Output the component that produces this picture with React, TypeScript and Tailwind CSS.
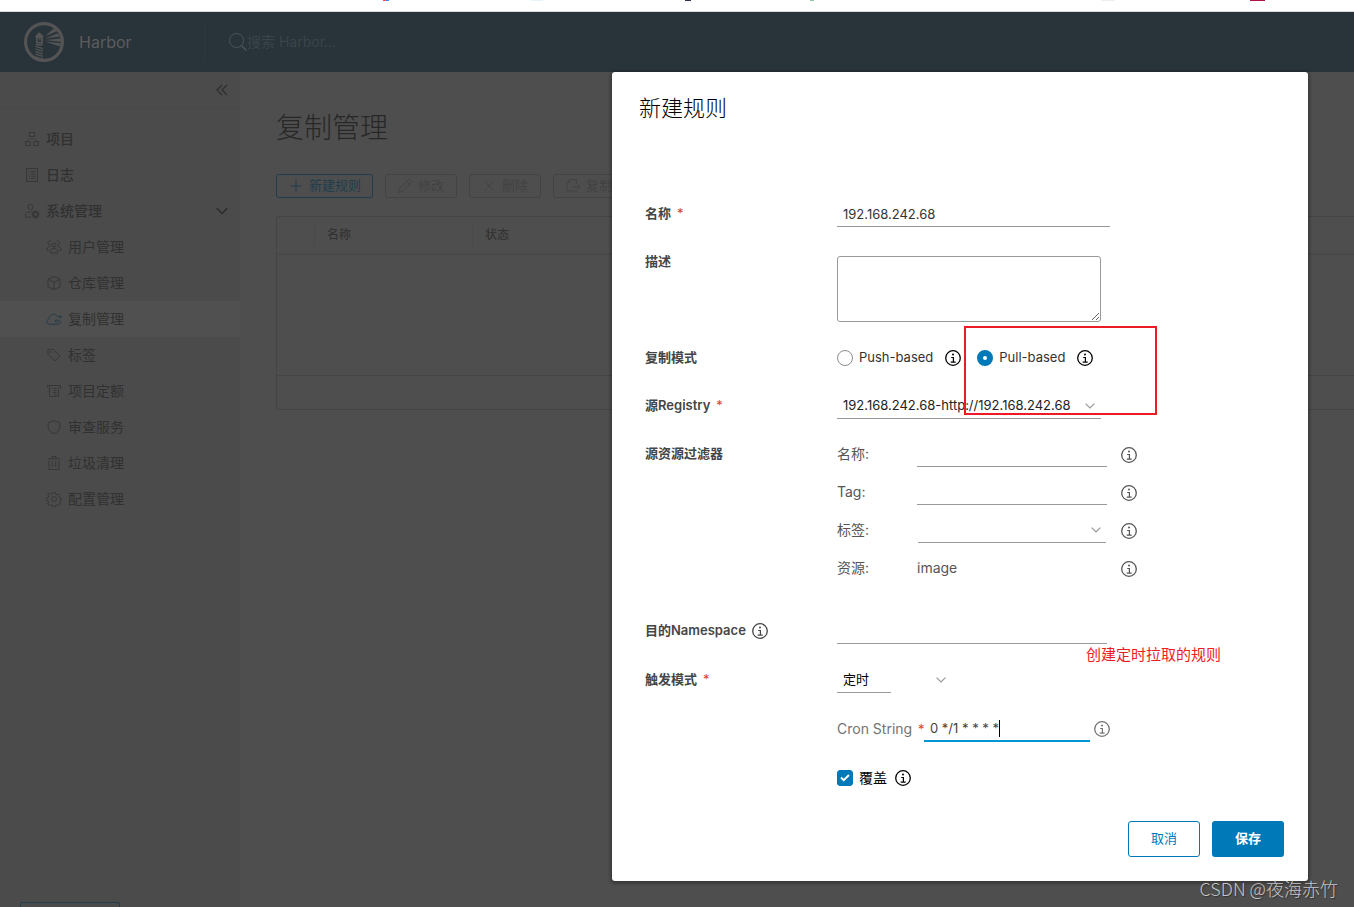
import { ReactNode } from 'react';
import clsx from 'clsx';

type IconName =
  | 'projects'
  | 'logs'
  | 'admin'
  | 'users'
  | 'registry'
  | 'replication'
  | 'tag'
  | 'quota'
  | 'shield'
  | 'trash'
  | 'cog';

const ICONS: Record<IconName, ReactNode> = {
  projects: (
    <>
      <rect x="5.5" y="1.5" width="5" height="4" />
      <rect x="1.5" y="10.5" width="4.5" height="4" />
      <rect x="10" y="10.5" width="4.5" height="4" />
      <path d="M8 5.5v2.5M3.75 10.5V8h8.5v2.5" strokeOpacity=".5" />
    </>
  ),
  logs: (
    <>
      <rect x="2.5" y="1.5" width="11" height="13" />
      <path d="M4.8 4.5h1M7 4.5h4.3M4.8 6.8h1M7 6.8h4.3M4.8 9.1h1M7 9.1h4.3M4.8 11.4h1M7 11.4h4.3" />
    </>
  ),
  admin: (
    <>
      <circle cx="6.5" cy="4" r="2.6" />
      <path d="M7 14.2H1.5v-2.4C2.4 9.8 4.2 8.7 6.5 8.7c.5 0 .9 0 1.3.1" />
      <circle cx="11.5" cy="11.5" r="2.4" strokeWidth="2" />
      <path
        d="M11.5 7.6v1M11.5 14.4v1M7.6 11.5h1M14.4 11.5h1M8.8 8.8l.7.7M13.5 13.5l.7.7M14.2 8.8l-.7.7M9.5 13.5l-.7.7"
        strokeWidth="1.6"
      />
    </>
  ),
  users: (
    <>
      <circle cx="8" cy="6" r="2" />
      <path d="M4.5 14v-2.6C5.2 10 6.4 9.4 8 9.400s2.800.6 3.500 2V14z" />
      <path d="M4.800 5.600a1.900 1.900 0 1 1 .6-3M11.200 5.600a1.900 1.900 0 1 0-.6-3M2.800 11.500H1.200V9.200C1.700 8 2.700 7.400 4.200 7.400M13.200 11.500h1.600V9.200c-.5-1.200-1.500-1.800-3-1.800" />
    </>
  ),
  registry: <path d="M8 1.5l6 2.700v7.600l-6 2.700-6-2.700V4.200zM2 4.200l6 2.900 6-2.900M8 7.100v7.400" />,
  replication: (
    <>
      <path d="M14.800 10.500c-.2 1.600-1.300 2.700-3 2.700H3.500C1.900 13.200.8 12 .8 10.600c0-1.500 1-2.500 2.400-2.700C3 5 5 3.200 7.400 3.200c1.900 0 3.200.9 3.900 2.500" />
      <path d="M11.500 5.700h4M13.800 4l1.700 1.700-1.700 1.700M14 9.800H9M10.700 8L9 9.800l1.700 1.700" />
    </>
  ),
  tag: (
    <>
      <path d="M2 2.800v4.400l6.900 6.900 4.900-4.900L7.200 2.300H2.500z" />
      <circle cx="4.600" cy="4.900" r=".6" />
    </>
  ),
  quota: (
    <>
      <path d="M1.500 4.500v-2h13v3.500M3.500 2.500v11h9v-9" />
      <path d="M6.500 5.500h4M8 7.500h2.500M6.500 9.500h4M8 11.500h2.500" />
    </>
  ),
  shield: <path d="M8 1.400c1.800 1.300 3.700 1.900 5.800 2v5.100c0 2.700-2.400 4.900-5.800 6.200-3.400-1.300-5.800-3.500-5.800-6.200V3.400c2.100-.1 4-.7 5.800-2z" />,
  trash: (
    <>
      <path d="M1.800 3.700h12.400M6 3.500v-2h4v2M3 5.500v9h10v-9" />
      <path d="M6.300 6v6M9.700 6v6" />
    </>
  ),
  cog: (
    <>
      <circle cx="8" cy="8" r="2.500" />
      <path d="M6.700 1.500h2.600l.4 1.800 1.300.5 1.500-1 1.800 1.800-1 1.500.5 1.300 1.700.4v1.600l-1.700.8-.5 1.300 1 1.500-1.800 1.500-1.500-.8-1.300.5-.4 1.800H6.700l-.4-1.800-1.300-.5-1.500 1-1.800-1.800 1-1.500-.5-1.300-1.700-.4V6.900l1.700-.4.500-1.300-1-1.500 1.800-1.500 1.500 1 1.300-.5z" />
    </>
  ),
};

function Icon({ name, className }: { name: IconName; className?: string }) {
  return (
    <svg viewBox="0 0 16 16" className={clsx('w-4 h-4 shrink-0', className)} fill="none" stroke="currentColor">
      {ICONS[name]}
    </svg>
  );
}

function InfoIcon({ className }: { className?: string }) {
  return (
    <svg viewBox="0 0 16 16" className={clsx('w-4 h-4 shrink-0', className)} fill="none" stroke="currentColor">
      <circle cx="8" cy="8" r="7.3" strokeWidth="1.3" />
      <circle cx="8" cy="4.400" r="1" fill="currentColor" stroke="none" />
      <path d="M6.200 7.500h2.200v4.500M5.700 12.100h5" strokeWidth="1.200" />
    </svg>
  );
}

function Chevron({ className }: { className?: string }) {
  return (
    <svg viewBox="0 0 10 6" className={clsx('shrink-0', className ?? 'w-[10px] h-[6px]')} fill="none" stroke="currentColor" strokeWidth="1.2">
      <path d="M.6.6L5 5 9.400.6" />
    </svg>
  );
}

function Logo() {
  return (
    <svg viewBox="0 0 40 40" className="w-10 h-10 text-[#545454]" fill="currentColor">
      <circle cx="20" cy="20" r="18.4" fill="none" stroke="currentColor" strokeWidth="3.200" />
      <path d="M15.300 10.300l3.900 3.500v1.400h-7.800v-1.400z" />
      <path d="M12 15h7v6.500h-7zm1.700 1.500v3.600h3.600v-3.600z" fillRule="evenodd" />
      <path d="M15 17h1.800v1.600H15z" />
      <path d="M11.800 22h7v1.500h-7z" />
      <path
        d="M11.600 24.400l7.400 2.200M11.500 27l7.500 2.200M11.400 29.600l7.600 2.200M11.300 32.200l7.700 2.200M11.200 34.800l7.800 2.200"
        stroke="currentColor"
        strokeWidth="1.200"
      />
      <path d="M21 14.200l9.500-8.500 3 3.300zM21 16.600l12.800-5.400 2 3.300zM21 18l16-1.600v3.600zM21 19.500l16 1.700-1 3.300z" />
    </svg>
  );
}

const NAV: { label: string; icon: IconName; sub?: boolean; open?: boolean; active?: boolean }[] = [
  { label: '项目', icon: 'projects' },
  { label: '日志', icon: 'logs' },
  { label: '系统管理', icon: 'admin', open: true },
  { label: '用户管理', icon: 'users', sub: true },
  { label: '仓库管理', icon: 'registry', sub: true },
  { label: '复制管理', icon: 'replication', sub: true, active: true },
  { label: '标签', icon: 'tag', sub: true },
  { label: '项目定额', icon: 'quota', sub: true },
  { label: '审查服务', icon: 'shield', sub: true },
  { label: '垃圾清理', icon: 'trash', sub: true },
  { label: '配置管理', icon: 'cog', sub: true },
];

function Sidebar() {
  return (
    <aside className="w-60 shrink-0 flex flex-col bg-[#4b4b4b] text-[#313131]">
      <div className="h-9 shrink-0 flex items-center justify-end pr-3 border-b border-[#484848]">
        <button aria-label="Collapse" className="text-[#2c2c2c]">
          <svg viewBox="0 0 12 12" className="w-3 h-3" fill="none" stroke="currentColor" strokeWidth="1.200">
            <path d="M6 .8L1 6l5 5.200M11 .8L6 6l5 5.200" />
          </svg>
        </button>
      </div>
      <nav className="pt-[13px]">
        {NAV.map((item) => (
          <a
            key={item.label}
            href="#"
            className={clsx(
              'h-9 flex items-center gap-[6px] pr-3 text-sm',
              item.sub ? 'pl-[46px]' : 'pl-6 font-medium',
              item.active && 'bg-[#505050]'
            )}
          >
            <Icon name={item.icon} className={item.active ? 'text-[#263c48]' : 'text-[#373737]'} />
            <span className="flex-1">{item.label}</span>
            {item.open && <Chevron className="w-3 h-2 text-[#2c2c2c]" />}
          </a>
        ))}
      </nav>
      <div className="mt-auto mx-5 w-[100px] h-[5px] border border-b-0 border-[#243e4c] rounded-t-[3px]" />
    </aside>
  );
}

function ToolButton({ children, label, primary }: { children: ReactNode; label: string; primary?: boolean }) {
  return (
    <button
      disabled={!primary}
      className={clsx(
        'h-6 min-w-[72px] shrink-0 flex items-center gap-[5px] px-[11px] border rounded-[3px] text-[13px]',
        primary ? 'border-[#1f3d4d] text-[#1f3d4d]' : 'border-[#434343] text-[#424242]'
      )}
    >
      <svg viewBox="0 0 16 16" className="w-4 h-4" fill="none" stroke="currentColor">
        {children}
      </svg>
      {label}
    </button>
  );
}

function RulesPage() {
  return (
    <main className="flex-1 min-w-0 overflow-hidden pl-9 pt-9 bg-[#4e4e4e]">
      <h1 className="text-[28px] leading-10 font-light text-[#272727]">复制管理</h1>
      <div className="flex gap-3 mt-[26px]">
        <ToolButton label="新建规则" primary>
          <path d="M8 2.500v11M2.500 8h11" />
        </ToolButton>
        <ToolButton label="修改">
          <path d="M1.500 14.500l1-4L11.300 1.800c.6-.6 1.300-.5 1.900 0l1 1c.5.600.6 1.300 0 1.900L5.500 13.500zM9.800 3.300l2.900 2.900" />
        </ToolButton>
        <ToolButton label="删除">
          <path d="M4 4l8 8M12 4l-8 8" />
        </ToolButton>
        <ToolButton label="复制">
          <path d="M11.500 5.500v-4H5L2 4.500V13h9.500v-1M5 1.500v3H2M7.500 8.800H15M12.500 6.200L15 8.800l-2.500 2.600" />
        </ToolButton>
      </div>
      <div className="mt-[18px] border border-r-0 border-[#444] rounded-l-[3px]">
        <table className="w-full table-fixed text-xs text-left text-[#333]">
          <thead>
            <tr className="h-[37px] border-b-2 border-[#494949]">
              <th className="w-[37px]" />
              <th className="w-[158px] font-medium">
                <div className="h-6 leading-6 pl-3 border-l border-[#494949]">名称</div>
              </th>
              <th className="font-medium">
                <div className="h-6 leading-6 pl-3 border-l border-[#494949]">状态</div>
              </th>
            </tr>
          </thead>
          <tbody>
            <tr className="h-[121px]">
              <td colSpan={3} />
            </tr>
          </tbody>
        </table>
        <div className="h-[34px] border-t border-[#444]" />
      </div>
    </main>
  );
}

function Row({ label, htmlFor, required, info, className, children }: {
  label: string;
  htmlFor?: string;
  required?: boolean;
  info?: boolean;
  className?: string;
  children: ReactNode;
}) {
  return (
    <div className={clsx('flex items-start', className ?? 'min-h-12')}>
      <div className="w-48 shrink-0 h-[26px] flex items-center gap-[6px] text-[13px] font-semibold text-[#454545]">
        <label htmlFor={htmlFor}>{label}</label>
        {required && <span className="font-normal text-[#d9442a]">*</span>}
        {info && <InfoIcon />}
      </div>
      <div className="flex-1 min-w-0">{children}</div>
    </div>
  );
}

function Mode({ id, label, checked }: { id: string; label: string; checked?: boolean }) {
  return (
    <div className="flex items-center text-black">
      <input
        type="radio"
        id={id}
        name="mode"
        defaultChecked={checked}
        className="appearance-none w-4 h-4 mr-[6px] rounded-full border border-[#8c8c8c] checked:border-[6px] checked:border-[#0079b8]"
      />
      <label htmlFor={id} className="mr-3 text-[13px] text-[#333]">{label}</label>
      <InfoIcon />
    </div>
  );
}

const FIELD = 'block h-[26px] bg-transparent border-b border-[#999] outline-none text-[13px]';

function FilterRow({ label, id, children }: { label: string; id: string; children: ReactNode }) {
  return (
    <div className="h-[26px] flex items-center text-sm text-[#565656]">
      <label htmlFor={id} className="w-20">{label}</label>
      <div className="w-[204px]">{children}</div>
      <InfoIcon className="mt-[2px]" />
    </div>
  );
}

function RuleDialog() {
  return (
    <section
      role="dialog"
      aria-label="新建规则"
      className="relative w-[696px] bg-white rounded-[3px] shadow-[0_1px_3px_2px_rgba(0,0,0,0.25)]"
    >
      <h3 className="px-[27px] pt-5 text-[22px] leading-8 font-light text-black">新建规则</h3>
      <form className="px-[33px] pt-[77px]">
        <Row label="名称" htmlFor="name" required>
          <input id="name" defaultValue="192.168.242.68" className={clsx(FIELD, 'w-[273px] px-[6px] text-[#333]')} />
        </Row>
        <Row label="描述" htmlFor="desc" className="h-24">
          <textarea id="desc" className="block w-[264px] h-[66px] mt-[7px] border border-[#999] rounded-[3px]" />
        </Row>
        <Row label="复制模式" htmlFor="push">
          <div className="h-[26px] flex items-center gap-4">
            <Mode id="push" label="Push-based" />
            <Mode id="pull" label="Pull-based" checked />
          </div>
        </Row>
        <Row label="源Registry" htmlFor="registry" required>
          <div className="w-[264px] relative">
            <select id="registry" className={clsx(FIELD, 'appearance-none w-full px-[6px] text-[#222]')}>
              <option>192.168.242.68-http://192.168.242.68</option>
            </select>
            <Chevron className="absolute w-[10px] h-[6px] right-[6px] top-[10px] text-[#999]" />
          </div>
        </Row>
        <Row label="源资源过滤器" htmlFor="filter-name" className="h-[177px]">
          <div className="flex flex-col gap-3">
            <FilterRow label="名称:" id="filter-name">
              <input id="filter-name" className={clsx(FIELD, 'w-[190px]')} />
            </FilterRow>
            <FilterRow label="Tag:" id="filter-tag">
              <input id="filter-tag" className={clsx(FIELD, 'w-[190px]')} />
            </FilterRow>
            <FilterRow label="标签:" id="filter-label">
              <div className="w-[190px] px-px relative">
                <select id="filter-label" className={clsx(FIELD, 'appearance-none w-full')}>
                  <option></option>
                </select>
                <Chevron className="absolute w-[10px] h-[6px] right-[6px] top-[10px] text-[#999]" />
              </div>
            </FilterRow>
            <FilterRow label="资源:" id="filter-resource">
              <output id="filter-resource">image</output>
            </FilterRow>
          </div>
        </Row>
        <Row label="目的Namespace" htmlFor="namespace" info className="h-[49px]">
          <input id="namespace" className={clsx(FIELD, 'w-[270px]')} />
        </Row>
        <Row label="触发模式" htmlFor="trigger" required>
          <div className="flex items-center">
            <select id="trigger" className={clsx(FIELD, 'appearance-none w-[54px] px-[6px] text-black')}>
              <option>定时</option>
            </select>
            <Chevron className="w-[10px] h-[6px] ml-[45px] text-[#999]" />
          </div>
          <div className="mt-[23px] h-[26px] flex items-center text-sm text-[#737373]">
            <label htmlFor="cron" className="w-[81px] shrink-0">Cron String</label>
            <span className="w-[6px] text-[13px] text-[#d9442a]">*</span>
            <div className="relative">
              <input
                id="cron"
                defaultValue="0 */1 * * * *"
                className="block w-[166px] h-[26px] px-[6px] border-b-2 border-[#0095d3] outline-none text-[13px] text-[#444]"
              />
              <span className="absolute left-[75px] top-1 w-px h-[17px] bg-black" />
            </div>
            <InfoIcon className="ml-1" />
          </div>
          <div className="mt-6 h-6 flex items-center text-sm text-black">
            <span className="relative mr-[6px]">
              <input
                type="checkbox"
                id="override"
                defaultChecked
                className="block appearance-none w-4 h-4 rounded-[3px] border border-[#999] checked:bg-[#0079b8] checked:border-[#0079b8]"
              />
              <svg viewBox="0 0 16 16" className="absolute inset-0 w-4 h-4 pointer-events-none" fill="none" stroke="#fff" strokeWidth="2">
                <path d="M4 7.500l2.700 2.600L12 5" />
              </svg>
            </span>
            <label htmlFor="override" className="mr-2">覆盖</label>
            <InfoIcon />
          </div>
        </Row>
      </form>
      <footer className="flex justify-end gap-3 px-6 pt-[31px] pb-6 text-[13px]">
        <button className="w-[72px] h-9 rounded-[3px] border border-[#0079b8] text-[#0079b8]">取消</button>
        <button className="w-[72px] h-9 rounded-[3px] bg-[#0079b8] text-white font-semibold">保存</button>
      </footer>

      {/* Annotations */}
      <div className="absolute left-[352px] top-[254px] w-[193px] h-[89px] border-2 border-[#ed1c24] pointer-events-none" />
      <p className="absolute left-[474px] top-[571px] text-[15px] leading-6 text-[#ed1c24]">创建定时拉取的规则</p>
    </section>
  );
}

export default function App() {
  return (
    <div className="relative h-screen overflow-hidden flex flex-col bg-[#4e4e4e] font-['Inter','Noto_Sans_CJK_SC',sans-serif]">
      {/* Bottom edge of the bookmarks bar */}
      <div className="h-3 shrink-0 bg-white border-b border-[#d8dadc]">
        <svg className="w-full h-[11px]" fill="none">
          <path d="M383 .5h3" stroke="#ff4d6d" />
          <path d="M386 .5h3" stroke="#2d8cff" />
          <path d="M531 .5h12" stroke="#e8f4fb" />
          <path d="M685 .5h6" stroke="#2b3648" />
          <path d="M810 .5h4" stroke="#8fc7a4" />
          <path d="M1101 .5h14" stroke="#eee" />
          <path d="M1250 .5h15" stroke="#b0124a" />
        </svg>
      </div>
      <header className="h-[60px] shrink-0 flex items-center pl-6 bg-[#29333a] text-[#5c5c5c]">
        <Logo />
        <span className="ml-[15px] w-[125px] text-base">Harbor</span>
        <div className="h-10 border-l border-[#2e393f]" />
        <label className="ml-[23px] flex items-center text-[#4a5459]">
          <svg viewBox="0 0 20 20" className="w-5 h-5 -mr-px" fill="none" stroke="currentColor">
            <circle cx="8.500" cy="8.500" r="7" />
            <path d="M13.500 13.500l5 5" strokeWidth="1.500" />
          </svg>
          <input
            placeholder="搜索 Harbor..."
            aria-label="搜索"
            className="w-52 bg-transparent outline-none text-sm placeholder:text-[#3a444a]"
          />
        </label>
      </header>
      <div className="relative flex-1 min-h-0 flex">
        <Sidebar />
        <RulesPage />
        <div className="absolute inset-0 flex items-start justify-end pr-[46px]">
          <RuleDialog />
        </div>
      </div>
      <p className="absolute right-4 bottom-[7px] font-['Noto_Sans_CJK_SC',sans-serif] text-[18px] leading-6 font-light text-[#c4c4c4] [text-shadow:1px_1px_1px_#333]">
        CSDN @夜海赤竹
      </p>
    </div>
  );
}
